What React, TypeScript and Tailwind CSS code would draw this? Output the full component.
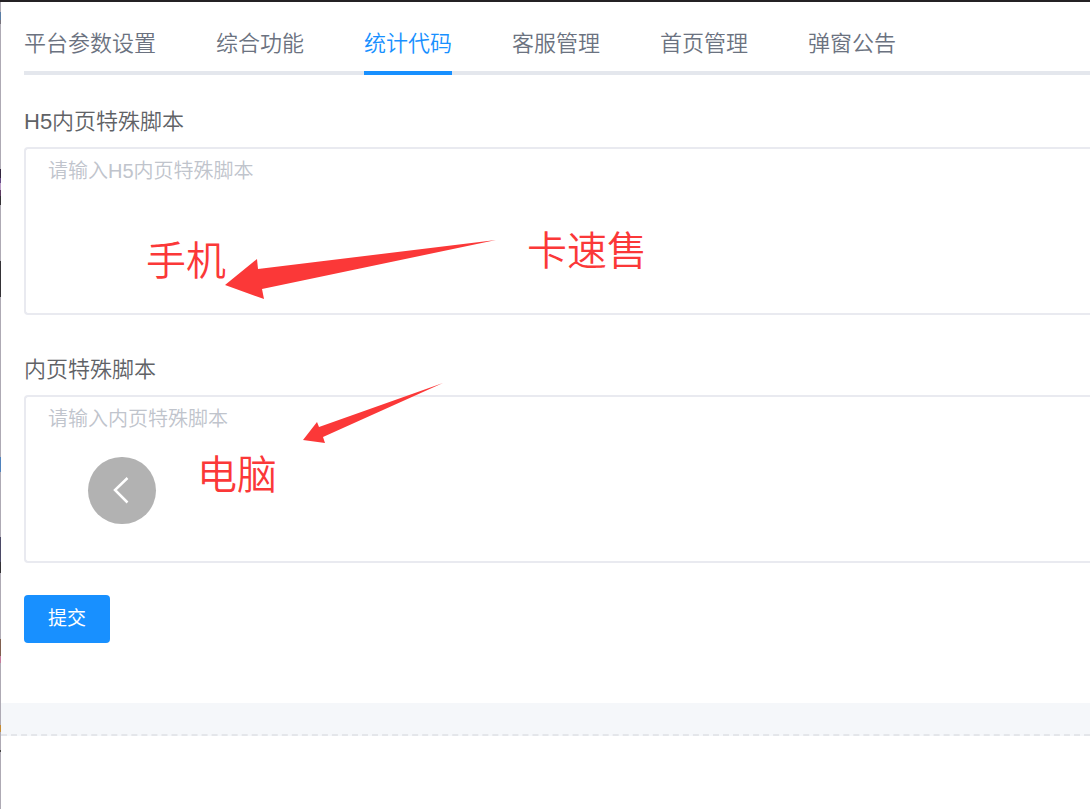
import { useState } from 'react'

const tabs = ['平台参数设置', '综合功能', '统计代码', '客服管理', '首页管理', '弹窗公告']

interface FieldProps {
  id: string
  label: string
  placeholder: string
  children: React.ReactNode
}

function ScriptField({ id, label, placeholder, children }: FieldProps) {
  const [value, setValue] = useState('')

  return (
    <div>
      <label htmlFor={id} className="block text-[22px] leading-8 text-[#606266]">{label}</label>
      <div className="relative mt-[9px]">
        <textarea
          id={id}
          rows={5}
          value={value}
          onChange={e => setValue(e.target.value)}
          placeholder={placeholder}
          className="block w-full resize-none rounded-l border-2 border-r-0 border-[#e9eaf0] bg-white px-[22px] py-[7px] text-xl leading-[30px] text-[#606266] outline-none placeholder:text-[#c0c4cc]"
        />
        {children}
      </div>
    </div>
  )
}

export default function App() {
  const [active, setActive] = useState('统计代码')

  return (
    <div className="flex min-h-screen border-t-2 border-[#242124] bg-white font-['Liberation_Sans','Noto_Sans_CJK_SC',sans-serif] font-[350]">
      {/* sliver of the window behind */}
      <div className="w-px shrink-0 bg-[linear-gradient(#aeaab4_10px,#5a7da5_10px_18px,#77737c_18px_22px,#aeaab4_22px_167px,#33263f_167px_176px,#654a86_176px_181px,#b89ac4_181px_188px,#5d3a62_188px_194px,#343236_194px_203px,#aeaab4_203px_259px,#343236_259px_295px,#aeaab4_295px_455px,#4f82bd_455px_470px,#aeaab4_470px_535px,#4b4966_535px_560px,#343236_560px_571px,#aeaab4_571px_637px,#80604f_637px_654px,#c77b9d_654px_661px,#aeaab4_661px_723px,#c58a32_723px_730px,#aeaab4_730px_748px,#444_748px_750px,#aeaab4_750px)]" />

      <main className="min-w-0 flex-1">
        <div className="pl-[23px]">
          <nav className="flex gap-[60px] whitespace-nowrap border-b-4 border-[#e4e7ed]">
            {tabs.map(t => (
              <button
                key={t}
                type="button"
                onClick={() => setActive(t)}
                className={`-mb-1 cursor-pointer border-b-4 pt-[26px] pb-[11px] text-[22px] leading-8 ${t === active ? 'border-[#1890ff] text-[#1890ff]' : 'border-transparent text-[#6b7280]'}`}
              >
                {t}
              </button>
            ))}
          </nav>

          <form onSubmit={e => e.preventDefault()} className="pt-[31px] pb-[60px]">
            <div className="flex flex-col gap-[39px]">
              <ScriptField id="h5-script" label="H5内页特殊脚本" placeholder="请输入H5内页特殊脚本">
                <span className="pointer-events-none absolute top-[94px] left-[122px] text-[40px] leading-10 text-[#fb3838]">手机</span>
                <svg className="pointer-events-none absolute top-[92px] left-[200px]" width="272" height="62" viewBox="0 0 272 62" fill="#fb3838">
                  <path d="M1 46 33 20 34 30 272 1 38 50 40 60Z" />
                </svg>
                <span className="pointer-events-none absolute top-[84px] left-[503px] text-[40px] leading-10 text-[#fb3838]">卡速售</span>
              </ScriptField>

              <ScriptField id="page-script" label="内页特殊脚本" placeholder="请输入内页特殊脚本">
                <svg className="pointer-events-none absolute -top-3 left-[278px]" width="142" height="62" viewBox="0 0 142 62" fill="#fb3838">
                  <path d="M1 57 15 39 17 44 141 0 21 54 23 60Z" />
                </svg>
                <span className="pointer-events-none absolute top-[60px] left-[173px] text-[40px] leading-10 text-[#fb3838]">电脑</span>
                <button type="button" aria-label="返回" className="absolute top-[62px] left-16 flex h-[67px] w-[68px] items-center justify-center rounded-full bg-[#b2b2b2]">
                  <svg width="68" height="67" viewBox="0 0 68 67" fill="none" stroke="#fff" strokeWidth="2.500">
                    <path d="M39.500 21 27 33 39.500 45.500" />
                  </svg>
                </button>
              </ScriptField>
            </div>

            <button type="submit" className="mt-8 block h-12 cursor-pointer rounded-sm bg-[#1890ff] px-6 text-[19px] leading-6 font-normal text-white">
              提交
            </button>
          </form>
        </div>

        <div className="h-[33px] border-b-2 border-dashed border-[#e4e6ea] bg-[#f5f7fa]" />
      </main>
    </div>
  )
}
